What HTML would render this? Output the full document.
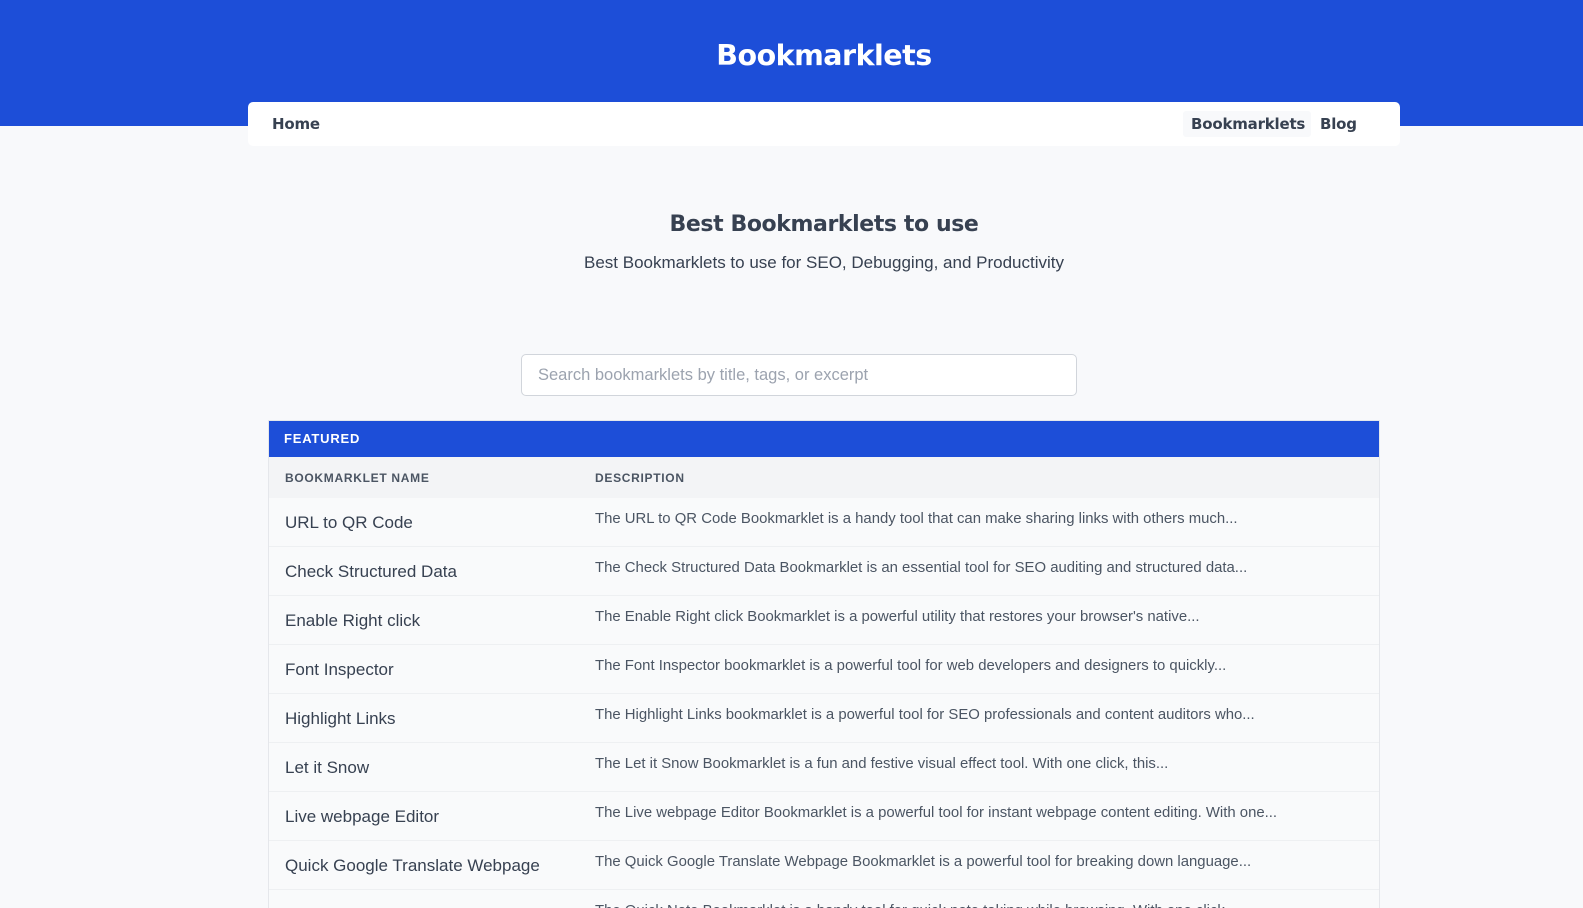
<!DOCTYPE html>
<html style="overflow:hidden;width:1583px;height:908px"><head><meta charset="utf-8"><style>
*{margin:0;padding:0;box-sizing:border-box}
body{width:1583px;height:908px;overflow:hidden;background:#f8f9fb;font-family:"Liberation Sans",sans-serif;color:#374151;position:relative}
.band{position:absolute;left:0;top:0;width:1583px;height:126px;background:#1d4ed8}
.title{position:absolute;top:39px;left:0;width:1648px;text-align:center;color:#fff;font-weight:bold;font-size:28.5px;font-family:"DejaVu Sans",sans-serif;letter-spacing:-0.5px}
.nav{position:absolute;left:248px;top:102px;width:1152px;height:44px;background:#fff;border-radius:5px}
.nav a{position:absolute;top:13px;font-weight:bold;font-size:15px;color:#374151;font-family:"DejaVu Sans",sans-serif;letter-spacing:-0.2px}
.h1{position:absolute;top:212px;left:0;width:1648px;text-align:center;font-weight:bold;font-size:22px;font-family:"DejaVu Sans",sans-serif;color:#374151;letter-spacing:-0.4px}
.sub{position:absolute;top:253px;left:0;width:1648px;text-align:center;font-size:17px;color:#374151}
.search{position:absolute;left:521px;top:354px;width:556px;height:42px;background:#fff;border:1px solid #d1d5db;border-radius:5px;font-size:16.5px;color:#9ca3af;padding:11px 16px}
.tbl{position:absolute;left:268px;top:420px;width:1112px;height:488px;overflow:hidden;border:1px solid #e5e7eb;border-bottom:none;background:#f9fafb}
.feat{height:36px;background:#1d4ed8;color:#fff;font-weight:bold;font-size:13px;letter-spacing:0.8px;padding:10px 15px}
.th{height:41px;background:#f3f4f6;font-weight:bold;font-size:12px;color:#4b5563;letter-spacing:0.7px;position:relative}
.th span,.row span{position:absolute}
.row{height:49px;border-bottom:1px solid #eef0f2;position:relative}
.n{left:16px;top:15px;font-size:17px;color:#374151}
.d{left:326px;top:13px;font-size:14.9px;color:#4b5563}
</style></head><body>
<div class="band"></div>
<div class="title">Bookmarklets</div>
<div class="nav"><a style="left:24px">Home</a><div style="position:absolute;left:935px;top:9px;width:128px;height:26px;background:#f8f9fb;border-radius:3px"></div><a style="left:943px">Bookmarklets</a><a style="left:1072px">Blog</a></div>
<div class="h1">Best Bookmarklets to use</div>
<div class="sub">Best Bookmarklets to use for SEO, Debugging, and Productivity</div>
<div class="search">Search bookmarklets by title, tags, or excerpt</div>
<div class="tbl">
<div class="feat">FEATURED</div>
<div class="th"><span style="left:16px;top:14px">BOOKMARKLET NAME</span><span style="left:326px;top:14px">DESCRIPTION</span></div>
<div class="row"><span class="n">URL to QR Code</span><span class="d">The URL to QR Code Bookmarklet is a handy tool that can make sharing links with others much...</span></div>
<div class="row"><span class="n">Check Structured Data</span><span class="d">The Check Structured Data Bookmarklet is an essential tool for SEO auditing and structured data...</span></div>
<div class="row"><span class="n">Enable Right click</span><span class="d">The Enable Right click Bookmarklet is a powerful utility that restores your browser's native...</span></div>
<div class="row"><span class="n">Font Inspector</span><span class="d">The Font Inspector bookmarklet is a powerful tool for web developers and designers to quickly...</span></div>
<div class="row"><span class="n">Highlight Links</span><span class="d">The Highlight Links bookmarklet is a powerful tool for SEO professionals and content auditors who...</span></div>
<div class="row"><span class="n">Let it Snow</span><span class="d">The Let it Snow Bookmarklet is a fun and festive visual effect tool. With one click, this...</span></div>
<div class="row"><span class="n">Live webpage Editor</span><span class="d">The Live webpage Editor Bookmarklet is a powerful tool for instant webpage content editing. With one...</span></div>
<div class="row"><span class="n">Quick Google Translate Webpage</span><span class="d">The Quick Google Translate Webpage Bookmarklet is a powerful tool for breaking down language...</span></div>
<div class="row"><span class="n">Quick Note</span><span class="d">The Quick Note Bookmarklet is a handy tool for quick note taking while browsing. With one click...</span></div>
</div>
</body></html>
